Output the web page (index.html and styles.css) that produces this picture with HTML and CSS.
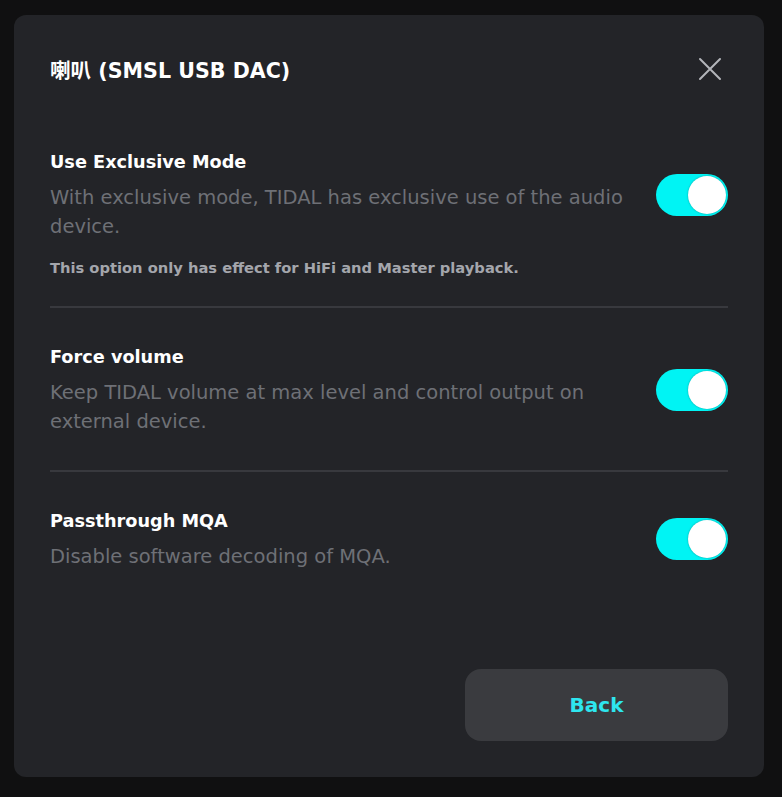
FILE: index.html
```html
<!DOCTYPE html>
<html lang="en">
<head>
    <meta charset="UTF-8">
    <meta name="viewport" content="width=device-width, initial-scale=1.0">
    <title>Audio device</title>
    <link rel="stylesheet" href="styles.css">
</head>
<body>
    <div id="dialog">
        <div class="header">
            <h2 class="title">喇叭 (SMSL USB DAC)</h2>
            <button class="close" aria-label="Close">
                <svg width="24" height="24" viewBox="0 0 24 24">
                    <path d="M2 2 L22 22 M22 2 L2 22" stroke="#b3b5ba" stroke-width="2" stroke-linecap="round"/>
                </svg>
            </button>
        </div>

        <div class="option option-note">
            <div class="row">
                <div class="text">
                    <div class="name">Use Exclusive Mode</div>
                    <div class="desc">With exclusive mode, TIDAL has exclusive use of the audio device.</div>
                </div>
                <div class="toggle on"><span class="knob"></span></div>
            </div>
            <div class="note">This option only has effect for HiFi and Master playback.</div>
        </div>

        <div class="option">
            <div class="row">
                <div class="text">
                    <div class="name">Force volume</div>
                    <div class="desc">Keep TIDAL volume at max level and control output on external device.</div>
                </div>
                <div class="toggle on"><span class="knob"></span></div>
            </div>
        </div>

        <div class="option last">
            <div class="row">
                <div class="text">
                    <div class="name">Passthrough MQA</div>
                    <div class="desc">Disable software decoding of MQA.</div>
                </div>
                <div class="toggle on"><span class="knob"></span></div>
            </div>
        </div>

        <div class="footer">
            <button class="back">Back</button>
        </div>
    </div>
</body>
</html>
```

FILE: styles.css
```css
body {
    font-family: "DejaVu Sans", "Noto Sans CJK SC", sans-serif;
    background-color: #101011;
    margin: 0;
    padding: 15px 18px 20px 14px;
}
#dialog {
    width: 750px;
    height: 762px;
    box-sizing: border-box;
    padding: 36px;
    background-color: #232428;
    border-radius: 12px;
    display: flex;
    flex-direction: column;
}
.header {
    display: flex;
    justify-content: space-between;
    align-items: center;
    height: 36px;
    margin-bottom: 61px;
}
.title {
    margin: 0;
    font-size: 20.6px;
    font-weight: 600;
    color: #fff;
}
.close {
    background: none;
    border: none;
    padding: 0;
    width: 24px;
    height: 24px;
    margin-right: 6px;
    cursor: pointer;
}
.option {
    padding: 35px 0 34px;
    border-bottom: 2px solid #38393e;
}
.option-note {
    padding-top: 0;
    padding-bottom: 27px;
}
.option.last {
    border-bottom: none;
}
.row {
    display: flex;
    align-items: center;
    justify-content: space-between;
}
.text {
    width: 590px;
}
.name {
    font-size: 17.7px;
    font-weight: 600;
    line-height: 28px;
    color: #fff;
}
.desc {
    margin-top: 7px;
    font-size: 19.5px;
    line-height: 29px;
    color: #6e7076;
}
.note {
    margin-top: 16px;
    font-size: 14.7px;
    font-weight: 600;
    line-height: 22px;
    color: #a4a6ac;
}
.toggle {
    position: relative;
    width: 72px;
    height: 42px;
    border-radius: 21px;
    background-color: #00f4f4;
    flex-shrink: 0;
}
.knob {
    position: absolute;
    top: 2px;
    right: 2px;
    width: 38px;
    height: 38px;
    border-radius: 50%;
    background-color: #fff;
    box-shadow: 0 0 2px rgba(0, 0, 0, 0.35);
}
.footer {
    margin-top: auto;
    display: flex;
    justify-content: flex-end;
}
.back {
    width: 263px;
    height: 72px;
    border: none;
    border-radius: 16px;
    background-color: #3a3b3f;
    color: #2ee6ef;
    font-family: "DejaVu Sans", sans-serif;
    font-size: 20px;
    font-weight: 600;
    cursor: pointer;
}
```
